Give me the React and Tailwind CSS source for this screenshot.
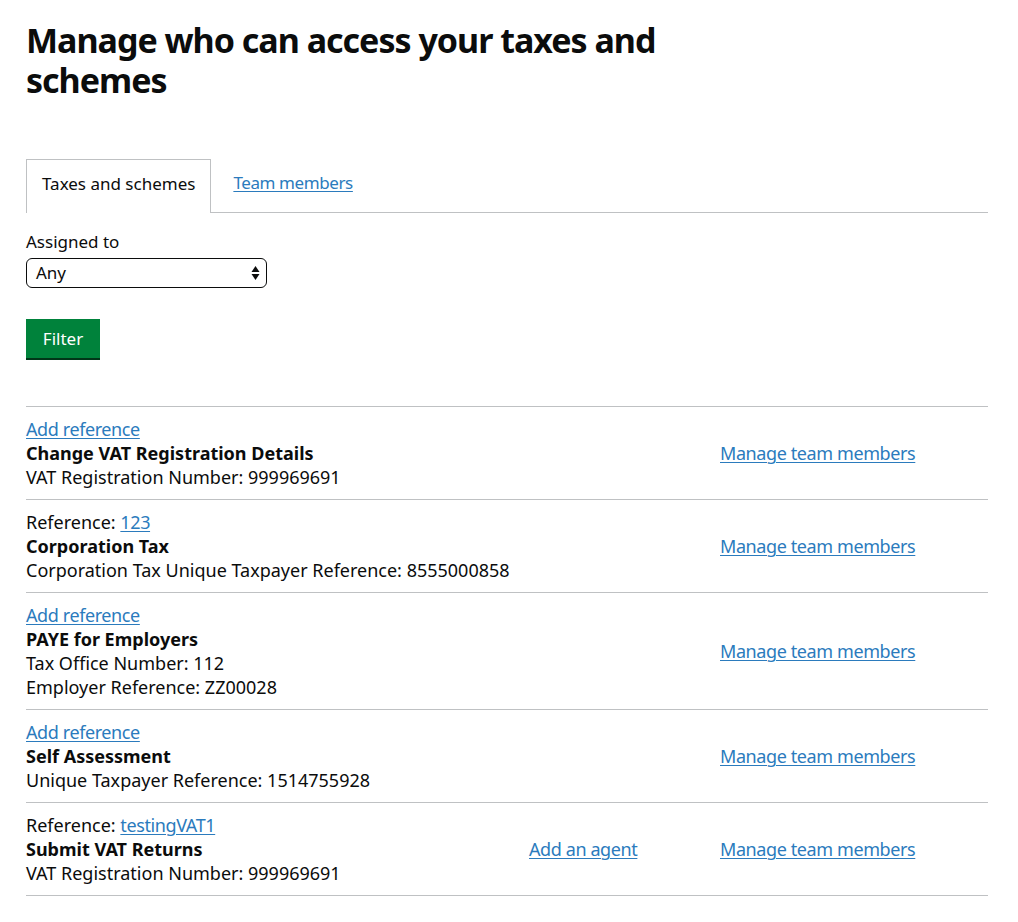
import React from "react";

const rows = [
  {
    ref: null,
    title: "Change VAT Registration Details",
    lines: ["VAT Registration Number: 999969691"],
  },
  {
    ref: "123",
    title: "Corporation Tax",
    lines: ["Corporation Tax Unique Taxpayer Reference: 8555000858"],
  },
  {
    ref: null,
    title: "PAYE for Employers",
    lines: ["Tax Office Number: 112", "Employer Reference: ZZ00028"],
  },
  {
    ref: null,
    title: "Self Assessment",
    lines: ["Unique Taxpayer Reference: 1514755928"],
  },
  {
    ref: "testingVAT1",
    title: "Submit VAT Returns",
    lines: ["VAT Registration Number: 999969691"],
    agent: true,
  },
];

const link = "text-[#2b7bbd] underline underline-offset-2 decoration-1 tracking-[-0.4px]";

export default function App() {
  return (
    <div className="min-h-screen bg-white px-[26px] pt-[20px] text-[#0b0c0c] font-['Noto_Sans',sans-serif] text-[18px] leading-[24px]">
      <h1 className="max-w-[680px] text-[34px] leading-[40px] font-bold tracking-[-1px]">
        Manage who can access your taxes and schemes
      </h1>

      <div className="mt-[59px] flex w-[962px] border-b border-[#bfc1c3]">
        <div className="-mb-px border border-b-0 border-[#bfc1c3] bg-white px-[15px] pt-[12px] pb-[17px] text-[17px]">
          Taxes and schemes
        </div>
        <a href="#" className={`ml-[22px] pt-[12px] text-[17px] ${link}`}>
          Team members
        </a>
      </div>

      <div className="mt-[17px] text-[17px]">Assigned to</div>
      <div className="mt-[4px] flex h-[30px] w-[241px] items-center justify-between rounded-[6px] border-[1.5px] border-[#0b0c0c] pl-[9px] pr-[6px] text-[17px]">
        <span>Any</span>
        <svg width="9" height="16" viewBox="0 0 9 16">
          <path d="M4.5 1 L8.5 7 H0.5 Z" fill="#0b0c0c" />
          <path d="M4.5 15 L8.5 9 H0.5 Z" fill="#0b0c0c" />
        </svg>
      </div>

      <button className="mt-[31px] block h-[39px] w-[74px] bg-[#00823b] text-[17px] text-white shadow-[0_2px_0_#003618]">
        Filter
      </button>

      <div className="mt-[48px] w-[962px] border-t border-[#bfc1c3]">
        {rows.map((r, i) => (
          <div
            key={i}
            className="grid grid-cols-[503px_191px_1fr] items-center border-b border-[#bfc1c3] py-[10px]"
          >
            <div>
              {r.ref ? (
                <div>
                  Reference:{" "}
                  <a href="#" className={link}>
                    {r.ref}
                  </a>
                </div>
              ) : (
                <div>
                  <a href="#" className={link}>
                    Add reference
                  </a>
                </div>
              )}
              <div className="font-bold">{r.title}</div>
              {r.lines.map((l) => (
                <div key={l}>{l}</div>
              ))}
            </div>
            <div>
              {r.agent && (
                <a href="#" className={link}>
                  Add an agent
                </a>
              )}
            </div>
            <div>
              <a href="#" className={link}>
                Manage team members
              </a>
            </div>
          </div>
        ))}
      </div>
    </div>
  );
}
